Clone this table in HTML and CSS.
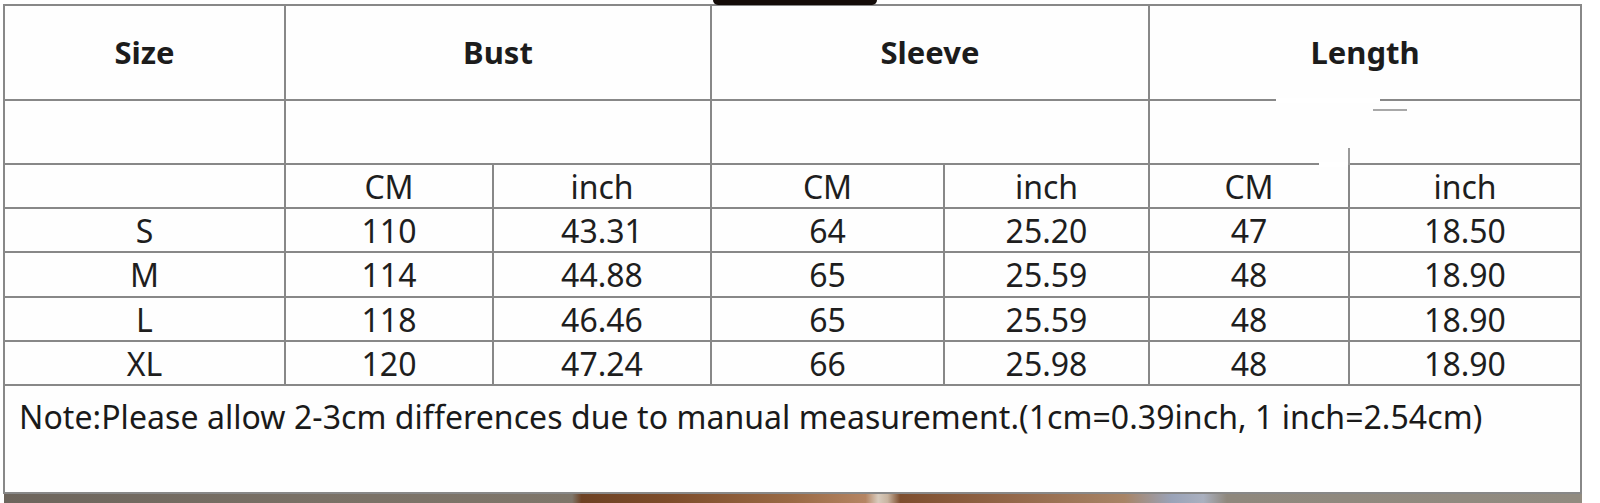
FILE: index.html
```html
<!DOCTYPE html>
<html lang="en">
<head>
<meta charset="utf-8">
<title>Size chart</title>
<link rel="stylesheet" href="styles.css">
</head>
<body>
<div class="page">
  <div class="chart">
    <div class="cell head">Size</div>
    <div class="cell head span2">Bust</div>
    <div class="cell head span2">Sleeve</div>
    <div class="cell head span2">Length</div>

    <div class="cell"></div>
    <div class="cell span2"></div>
    <div class="cell span2"></div>
    <div class="cell span2"></div>

    <div class="cell"></div>
    <div class="cell">CM</div>
    <div class="cell">inch</div>
    <div class="cell">CM</div>
    <div class="cell">inch</div>
    <div class="cell">CM</div>
    <div class="cell">inch</div>

    <div class="cell">S</div>
    <div class="cell">110</div>
    <div class="cell">43.31</div>
    <div class="cell">64</div>
    <div class="cell">25.20</div>
    <div class="cell">47</div>
    <div class="cell">18.50</div>

    <div class="cell">M</div>
    <div class="cell">114</div>
    <div class="cell">44.88</div>
    <div class="cell">65</div>
    <div class="cell">25.59</div>
    <div class="cell">48</div>
    <div class="cell">18.90</div>

    <div class="cell">L</div>
    <div class="cell">118</div>
    <div class="cell">46.46</div>
    <div class="cell">65</div>
    <div class="cell">25.59</div>
    <div class="cell">48</div>
    <div class="cell">18.90</div>

    <div class="cell">XL</div>
    <div class="cell">120</div>
    <div class="cell">47.24</div>
    <div class="cell">66</div>
    <div class="cell">25.98</div>
    <div class="cell">48</div>
    <div class="cell">18.90</div>

    <div class="cell note">Note:Please allow 2-3cm differences due to manual measurement.(1cm=0.39inch, 1 inch=2.54cm)</div>
  </div>
  <div class="photo-strip"></div>

  <div class="blob"></div>
  <div class="erase erase-a"></div>
  <div class="stray-line"></div>
  <div class="erase erase-b"></div>
  <div class="stray-vline"></div>
</div>
</body>
</html>
```

FILE: styles.css
```css
* { box-sizing: border-box; }

html, body {
  margin: 0;
  padding: 0;
  background: #ffffff;
  overflow: hidden;
}

.page {
  position: relative;
  width: 1600px;
  height: 503px;
  padding: 4px 0 0 3px;
}

.chart {
  display: grid;
  grid-template-columns: 281px 208px 218px 233px 205px 200px 232px;
  grid-template-rows: 95px 64px 44px 44px 45px 44px 44px 108px;
  width: 1579px;
  border-top: 2px solid #888888;
  border-left: 2px solid #888888;
  background: #fefefe;
}

.cell {
  display: flex;
  align-items: center;
  justify-content: center;
  border-right: 2px solid #888888;
  border-bottom: 2px solid #888888;
  font-family: "Noto Sans", "DejaVu Sans", sans-serif;
  font-size: 32px;
  color: #1e1e1e;
  line-height: 1;
  padding-top: 1px;
}

.span2 { grid-column: span 2; }

.head {
  font-weight: 700;
  font-size: 31px;
  color: #1c1c1c;
  padding-top: 0;
  padding-bottom: 1px;
}

.note {
  grid-column: 1 / -1;
  align-items: flex-start;
  justify-content: flex-start;
  padding: 11px 0 0 14px;
  font-size: 32px;
  line-height: 40px;
  color: #1a1a1a;
  letter-spacing: 0.06px;
}

.photo-strip {
  margin-left: 1px;
  width: 1578px;
  height: 11px;
  background: linear-gradient(90deg,
    #6d655c 0%, #7a7166 20%, #7f766a 36%,
    #6e4224 36.6%, #7d4c2a 42%, #9a6a45 50%, #b58563 54.6%,
    #d8cbbd 55.4%, #c8b4a0 56%, #7e4e2e 56.8%, #94684a 64%,
    #a88466 71%, #9aa3b8 74%, #aab0bf 76%, #8f887d 77.5%,
    #918b80 100%);
}

.blob {
  position: absolute;
  left: 713px;
  top: 0;
  width: 164px;
  height: 5px;
  background: #140b08;
  border-radius: 0 0 8px 8px;
}

.erase {
  position: absolute;
  background: #ffffff;
}

.erase-a {
  left: 1276px;
  top: 98px;
  width: 104px;
  height: 5px;
}

.erase-b {
  left: 1319px;
  top: 162px;
  width: 29px;
  height: 5px;
}

.stray-line {
  position: absolute;
  left: 1373px;
  top: 109px;
  width: 34px;
  height: 2px;
  background: #a8a8a8;
}

.stray-vline {
  position: absolute;
  left: 1348px;
  top: 148px;
  width: 2px;
  height: 17px;
  background: #9a9a9a;
}
```
